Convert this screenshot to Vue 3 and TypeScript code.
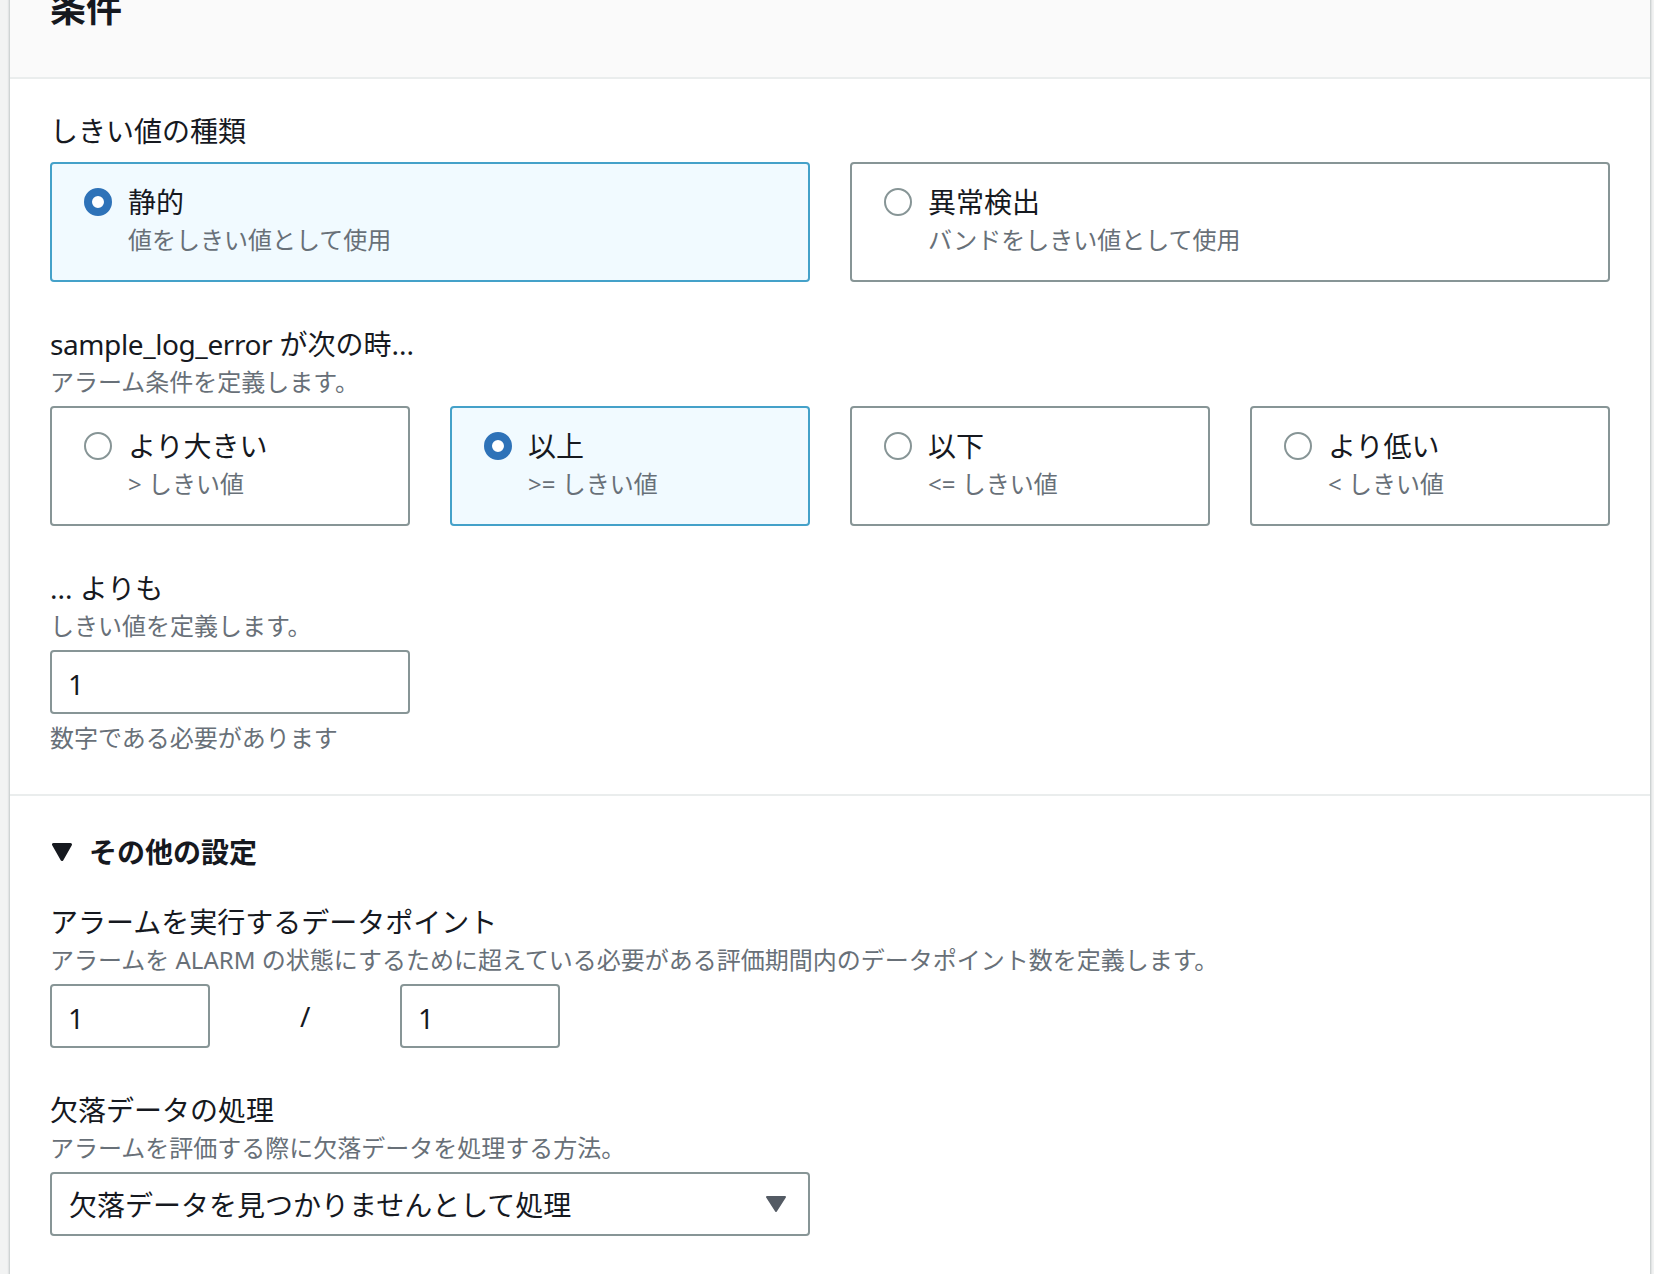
<script setup lang="ts">
type Choice = { title: string; desc: string; selected?: boolean }

const thresholdTypes: Choice[] = [
  { title: '静的', desc: '値をしきい値として使用', selected: true },
  { title: '異常検出', desc: 'バンドをしきい値として使用' },
]

const conditions: Choice[] = [
  { title: 'より大きい', desc: '> しきい値' },
  { title: '以上', desc: '>= しきい値', selected: true },
  { title: '以下', desc: '<= しきい値' },
  { title: 'より低い', desc: '< しきい値' },
]
</script>

<template>
  <div class="page">
    <main class="panel">
      <header class="panel__head">
        <h2 class="panel__title">条件</h2>
      </header>

      <section class="panel__body">
        <div class="label">しきい値の種類</div>
        <div class="tiles tiles--two">
          <div
            v-for="c in thresholdTypes"
            :key="c.title"
            class="tile"
            :class="{ 'tile--on': c.selected }"
          >
            <span class="radio" :class="{ 'radio--on': c.selected }" />
            <div>
              <div class="tile__title">{{ c.title }}</div>
              <div class="tile__desc">{{ c.desc }}</div>
            </div>
          </div>
        </div>

        <div class="label label--gap"><span class="metric">sample_log_error</span> が次の時...</div>
        <div class="desc">アラーム条件を定義します。</div>
        <div class="tiles tiles--four">
          <div
            v-for="c in conditions"
            :key="c.title"
            class="tile"
            :class="{ 'tile--on': c.selected }"
          >
            <span class="radio" :class="{ 'radio--on': c.selected }" />
            <div>
              <div class="tile__title">{{ c.title }}</div>
              <div class="tile__desc">{{ c.desc }}</div>
            </div>
          </div>
        </div>

        <div class="label label--gap">... よりも</div>
        <div class="desc">しきい値を定義します。</div>
        <input class="input input--threshold" value="1" readonly />
        <div class="hint">数字である必要があります</div>
      </section>

      <section class="panel__body panel__body--more">
        <div class="more">
          <svg class="more__arrow" width="20" height="18" viewBox="0 0 20 18" aria-hidden="true">
            <path d="M1.5 1.5h17L10 16.5z" fill="#16191f" stroke="#16191f" stroke-width="3" stroke-linejoin="round" />
          </svg>
          <span>その他の設定</span>
        </div>

        <div class="label label--first">アラームを実行するデータポイント</div>
        <div class="desc">アラームを ALARM の状態にするために超えている必要がある評価期間内のデータポイント数を定義します。</div>
        <div class="points">
          <input class="input input--small" value="1" readonly />
          <span class="points__sep">/</span>
          <input class="input input--small" value="1" readonly />
        </div>

        <div class="label label--gap">欠落データの処理</div>
        <div class="desc">アラームを評価する際に欠落データを処理する方法。</div>
        <div class="select">
          <span>欠落データを見つかりませんとして処理</span>
          <svg width="20" height="16" viewBox="0 0 20 16" aria-hidden="true">
            <path d="M1 1h18L10 15z" fill="#545b64" stroke="#545b64" stroke-width="2" stroke-linejoin="round" />
          </svg>
        </div>
      </section>
    </main>
  </div>
</template>

<style>
html,
body {
  margin: 0;
  background: #f2f3f3;
}
</style>

<style scoped>
.page {
  height: 1274px;
  overflow: hidden;
  padding: 0 4px 0 10px;
  box-sizing: border-box;
  background: #f2f3f3;
  color: #16191f;
  font-family: 'Noto Sans', 'Noto Sans CJK JP', sans-serif;
}

.panel {
  height: 1300px;
  margin-top: -20px;
  background: #fff;
  box-shadow: -1px 0 2px rgba(0, 28, 36, 0.2), 1px 0 2px rgba(0, 28, 36, 0.2);
}

.panel__head {
  height: 99px;
  box-sizing: border-box;
  padding: 0 40px;
  background: #fafafa;
  border-bottom: 2px solid #eaeded;
}

.panel__title {
  margin: 0;
  padding-top: 7px;
  font-size: 36px;
  line-height: 44px;
  font-weight: 700;
}

.panel__body {
  padding: 32px 40px 38px;
}

.panel__body--more {
  border-top: 2px solid #eaeded;
  padding-top: 36px;
}

.label {
  font-size: 28px;
  line-height: 40px;
}

.label--gap {
  margin-top: 42px;
}

.label--first {
  margin-top: 30px;
}

.metric {
  letter-spacing: -0.4px;
}

.desc,
.hint {
  font-size: 24px;
  line-height: 36px;
  color: #687078;
}

.hint {
  margin-top: 6px;
}

.tiles {
  display: grid;
  gap: 40px;
  margin-top: 6px;
}

.tiles--two {
  grid-template-columns: repeat(2, 1fr);
  margin-top: 11px;
}

.tiles--four {
  grid-template-columns: repeat(4, 1fr);
}

.tile {
  display: flex;
  gap: 16px;
  height: 120px;
  box-sizing: border-box;
  padding: 18px 32px;
  border: 2px solid #879596;
  border-radius: 4px;
}

.tile--on {
  background: #f1faff;
  border-color: #44a1c9;
}

.tile__title {
  font-size: 28px;
  line-height: 40px;
}

.tile__desc {
  font-size: 24px;
  line-height: 36px;
  color: #687078;
}

.radio {
  flex: none;
  width: 28px;
  height: 28px;
  margin-top: 6px;
  box-sizing: border-box;
  border: 2px solid #879596;
  border-radius: 50%;
  background: #fff;
}

.radio--on {
  border: 8px solid #2e72b8;
}

.input {
  display: block;
  height: 64px;
  box-sizing: border-box;
  margin: 0;
  padding: 3px 16px 0;
  border: 2px solid #879596;
  border-radius: 4px;
  outline: none;
  background: #fff;
  color: #16191f;
  font: inherit;
  font-size: 28px;
}

.input--threshold {
  width: 360px;
  margin-top: 6px;
}

.input--small {
  width: 160px;
}

.more {
  display: flex;
  align-items: center;
  gap: 17px;
  padding-left: 2px;
  font-size: 28px;
  line-height: 40px;
  font-weight: 700;
}

.points {
  display: flex;
  align-items: center;
  margin-top: 6px;
}

.points__sep {
  width: 190px;
  box-sizing: border-box;
  padding-left: 90px;
  font-size: 28px;
}

.select {
  display: flex;
  align-items: center;
  justify-content: space-between;
  width: 760px;
  height: 64px;
  box-sizing: border-box;
  margin-top: 6px;
  padding: 0 22px 0 17px;
  border: 2px solid #879596;
  border-radius: 4px;
  font-size: 28px;
}
</style>
